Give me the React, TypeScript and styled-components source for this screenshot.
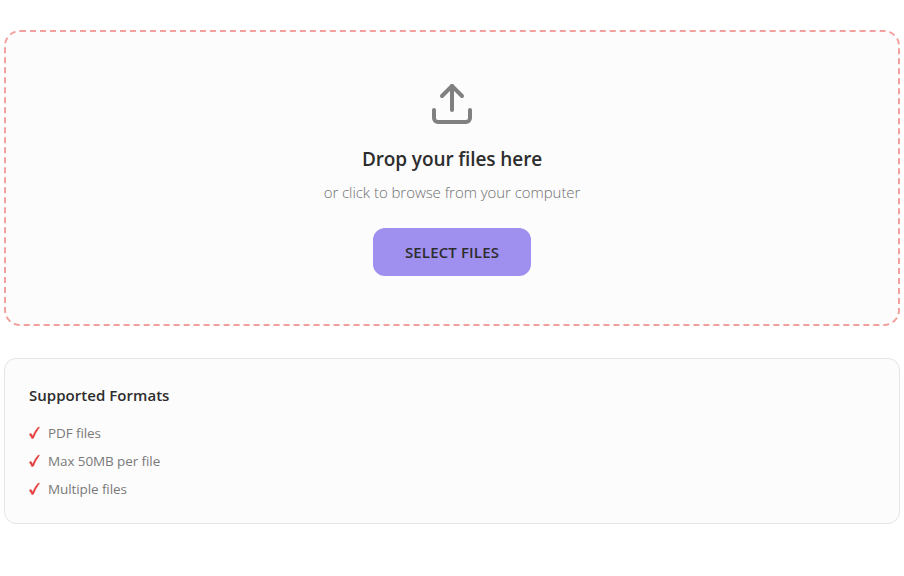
import React from "react";
import styled, { createGlobalStyle } from "styled-components";

const GlobalStyle = createGlobalStyle`
  *, *::before, *::after { box-sizing: border-box; }
  body {
    margin: 0;
    background: #ffffff;
    font-family: "Segoe UI", "Open Sans", "Noto Sans", sans-serif;
    color: #2d2d2d;
  }
`;

const Page = styled.main`
  display: flex;
  flex-direction: column;
  gap: 32px;
  padding: 30px 4px 52px;
`;

const DropZone = styled.section`
  display: flex;
  flex-direction: column;
  align-items: center;
  height: 296px;
  padding: 48px;
  border: 2px dashed #f1a09e;
  border-radius: 16px;
  background: #fcfcfc;
  cursor: pointer;
`;

const UploadIcon = styled.svg`
  display: block;
  width: 48px;
  height: 48px;
  margin-bottom: 16px;
  fill: none;
  stroke: #808080;
  stroke-width: 2;
  stroke-linecap: round;
  stroke-linejoin: round;
`;

const Title = styled.h2`
  margin: 0 0 7px;
  font-size: 19px;
  font-weight: 600;
  line-height: 30px;
  letter-spacing: -0.1px;
  white-space: nowrap;
`;

const Hint = styled.p`
  margin: 0 0 25px;
  color: #707070;
  font-size: 15px;
  font-weight: 300;
  line-height: 22px;
  letter-spacing: -0.05px;
  white-space: nowrap;
`;

const SelectButton = styled.button`
  width: 158px;
  height: 48px;
  flex: none;
  padding: 0;
  border: 0;
  border-radius: 12px;
  background: #9f8fef;
  color: #2d2d2d;
  font-family: inherit;
  font-size: 15px;
  font-weight: 600;
  letter-spacing: 0.15px;
  white-space: nowrap;
  cursor: pointer;
`;

const FormatsCard = styled.section`
  height: 166px;
  padding: 24px;
  border: 1px solid #e5e5e5;
  border-radius: 12px;
  background: #fcfcfc;
`;

const FormatsTitle = styled.h3`
  margin: 0 0 12px;
  font-size: 15px;
  font-weight: 600;
  line-height: 24px;
  letter-spacing: 0.04px;
`;

const FormatList = styled.ul`
  margin: 0;
  padding: 0;
  list-style: none;
`;

const FormatItem = styled.li`
  display: flex;
  align-items: center;
  height: 28px;
  color: #7a7a7a;
  font-size: 13.5px;
  letter-spacing: -0.1px;
`;

const CheckIcon = styled.svg`
  flex: none;
  width: 11px;
  height: 14px;
  margin-right: 8px;
  fill: #e53e3e;
  stroke: #e53e3e;
  stroke-width: 0.35;
`;

const formats = ["PDF files", "Max 50MB per file", "Multiple files"];

export default function App() {
  return (
    <>
      <GlobalStyle />
      <Page>
        <DropZone>
          <UploadIcon viewBox="0 0 24 24" aria-hidden="true">
            <path d="M21 15v4a2 2 0 0 1-2 2H5a2 2 0 0 1-2-2v-4" />
            <polyline points="17 8 12 3 7 8" />
            <line x1="12" y1="3" x2="12" y2="15" />
          </UploadIcon>
          <Title>Drop your files here</Title>
          <Hint>or click to browse from your computer</Hint>
          <SelectButton type="button">SELECT FILES</SelectButton>
        </DropZone>
        <FormatsCard>
          <FormatsTitle>Supported Formats</FormatsTitle>
          <FormatList>
            {formats.map((label) => (
              <FormatItem key={label}>
                <CheckIcon viewBox="0 0 11 14" aria-hidden="true">
                  <path d="M0.2 8.4 L1.9 7.2 Q3 8.2 3.5 10.2 Q5.6 4.9 9 1.2 L10.6 1.2 Q6.8 6.2 4.5 12.2 L2.8 12.7 Q2 10 0.2 8.4 Z" />
                </CheckIcon>
                {label}
              </FormatItem>
            ))}
          </FormatList>
        </FormatsCard>
      </Page>
    </>
  );
}
